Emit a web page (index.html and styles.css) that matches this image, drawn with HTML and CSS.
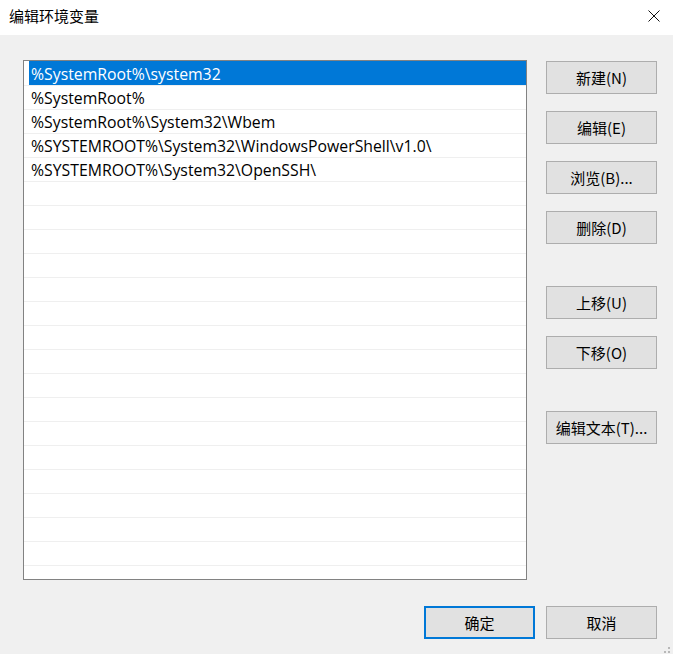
FILE: index.html
```html
<!DOCTYPE html>
<html lang="zh-CN">
<head>
<meta charset="utf-8">
<title>编辑环境变量</title>
<link rel="stylesheet" href="styles.css">
</head>
<body>
<div class="window">
  <div class="titlebar">
    <span class="title">编辑环境变量</span>
    <button class="close" aria-label="关闭">
      <svg width="12" height="12" viewBox="0 0 12 12"><path d="M0.5 0.5 L11.5 11.5 M11.5 0.5 L0.5 11.5" stroke="#111" stroke-width="1" fill="none"/></svg>
    </button>
  </div>
  <div class="body">
    <div class="main">
      <div class="list">
        <div class="row selected"><span class="cell">%SystemRoot%\system32</span></div>
        <div class="row"><span class="cell">%SystemRoot%</span></div>
        <div class="row"><span class="cell">%SystemRoot%\System32\Wbem</span></div>
        <div class="row"><span class="cell">%SYSTEMROOT%\System32\WindowsPowerShell\v1.0\</span></div>
        <div class="row"><span class="cell">%SYSTEMROOT%\System32\OpenSSH\</span></div>
        <div class="row"></div><div class="row"></div><div class="row"></div><div class="row"></div>
        <div class="row"></div><div class="row"></div><div class="row"></div><div class="row"></div>
        <div class="row"></div><div class="row"></div><div class="row"></div><div class="row"></div>
        <div class="row"></div><div class="row"></div><div class="row"></div><div class="row"></div>
        <div class="row"></div>
      </div>
      <div class="side">
        <div class="group">
          <button class="btn">新建(N)</button>
          <button class="btn">编辑(E)</button>
          <button class="btn">浏览(B)...</button>
          <button class="btn">删除(D)</button>
        </div>
        <div class="group">
          <button class="btn">上移(U)</button>
          <button class="btn">下移(O)</button>
        </div>
        <div class="group">
          <button class="btn">编辑文本(T)...</button>
        </div>
      </div>
    </div>
    <div class="footer">
      <button class="btn default">确定</button>
      <button class="btn">取消</button>
    </div>
  </div>
  <div class="grip">
    <span class="dot d1"></span><span class="dot d2"></span><span class="dot d3"></span>
  </div>
</div>
</body>
</html>
```
FILE: styles.css
```css
html, body {
  margin: 0;
  padding: 0;
}
body {
  width: 673px;
  height: 654px;
  overflow: hidden;
  background: #f0f0f0;
  font-family: "Open Sans", "Noto Sans CJK SC", sans-serif;
  font-size: 15px;
  color: #000;
}
.window {
  position: relative;
  width: 673px;
  height: 654px;
}
.titlebar {
  height: 35px;
  background: #fff;
  display: flex;
  align-items: center;
  justify-content: space-between;
  padding: 0 13px 0 9px;
}
.title {
  font-family: "Noto Sans CJK SC", sans-serif;
  font-size: 15px;
  line-height: 20px;
  margin-top: -3px;
}
.close {
  border: 0;
  padding: 0;
  background: transparent;
  width: 12px;
  height: 12px;
  display: block;
  margin-top: -3px;
}
.close svg {
  display: block;
}
.body {
  padding: 25px 16px 0 23px;
}
.main {
  display: flex;
  gap: 19px;
}
.list {
  width: 502px;
  border: 1px solid #828282;
  background: #fff;
  overflow: hidden;
  padding-top: 1px;
  box-sizing: content-box;
  height: 517px;
}
.row {
  height: 23px;
  border-bottom: 1px solid #efefef;
  display: flex;
}
.cell {
  flex: 1;
  margin-left: 5px;
  padding-left: 2px;
  line-height: 24px;
  margin-top: -1px;
  height: 24px;
  box-sizing: border-box;
  padding-top: 2px;
  line-height: 22px;
  white-space: nowrap;
  font-family: "Open Sans", sans-serif;
  font-size: 15.8px;
}
.row.selected .cell {
  background: #0078d7;
  color: #fff;
}
.side {
  width: 111px;
  padding-top: 1px;
  display: flex;
  flex-direction: column;
  gap: 42px;
}
.group {
  display: flex;
  flex-direction: column;
  gap: 17px;
}
.btn {
  width: 111px;
  height: 33px;
  box-sizing: border-box;
  background: #e1e1e1;
  border: 1px solid #adadad;
  font-family: "Noto Sans CJK SC", sans-serif;
  font-size: 15px;
  color: #000;
  padding: 0;
  margin: 0;
  display: flex;
  align-items: center;
  justify-content: center;
}
.btn.default {
  border: 2px solid #0078d7;
}
.footer {
  display: flex;
  justify-content: flex-end;
  gap: 11px;
  margin-top: 26px;
}
.grip {
  position: absolute;
  right: 2px;
  bottom: 0;
  width: 8px;
  height: 8px;
}
.dot {
  position: absolute;
  width: 2px;
  height: 2px;
  background: #b8b8b8;
}
.d1 { left: 5px; top: 1px; }
.d2 { left: 1px; top: 5px; }
.d3 { left: 5px; top: 5px; }
```
